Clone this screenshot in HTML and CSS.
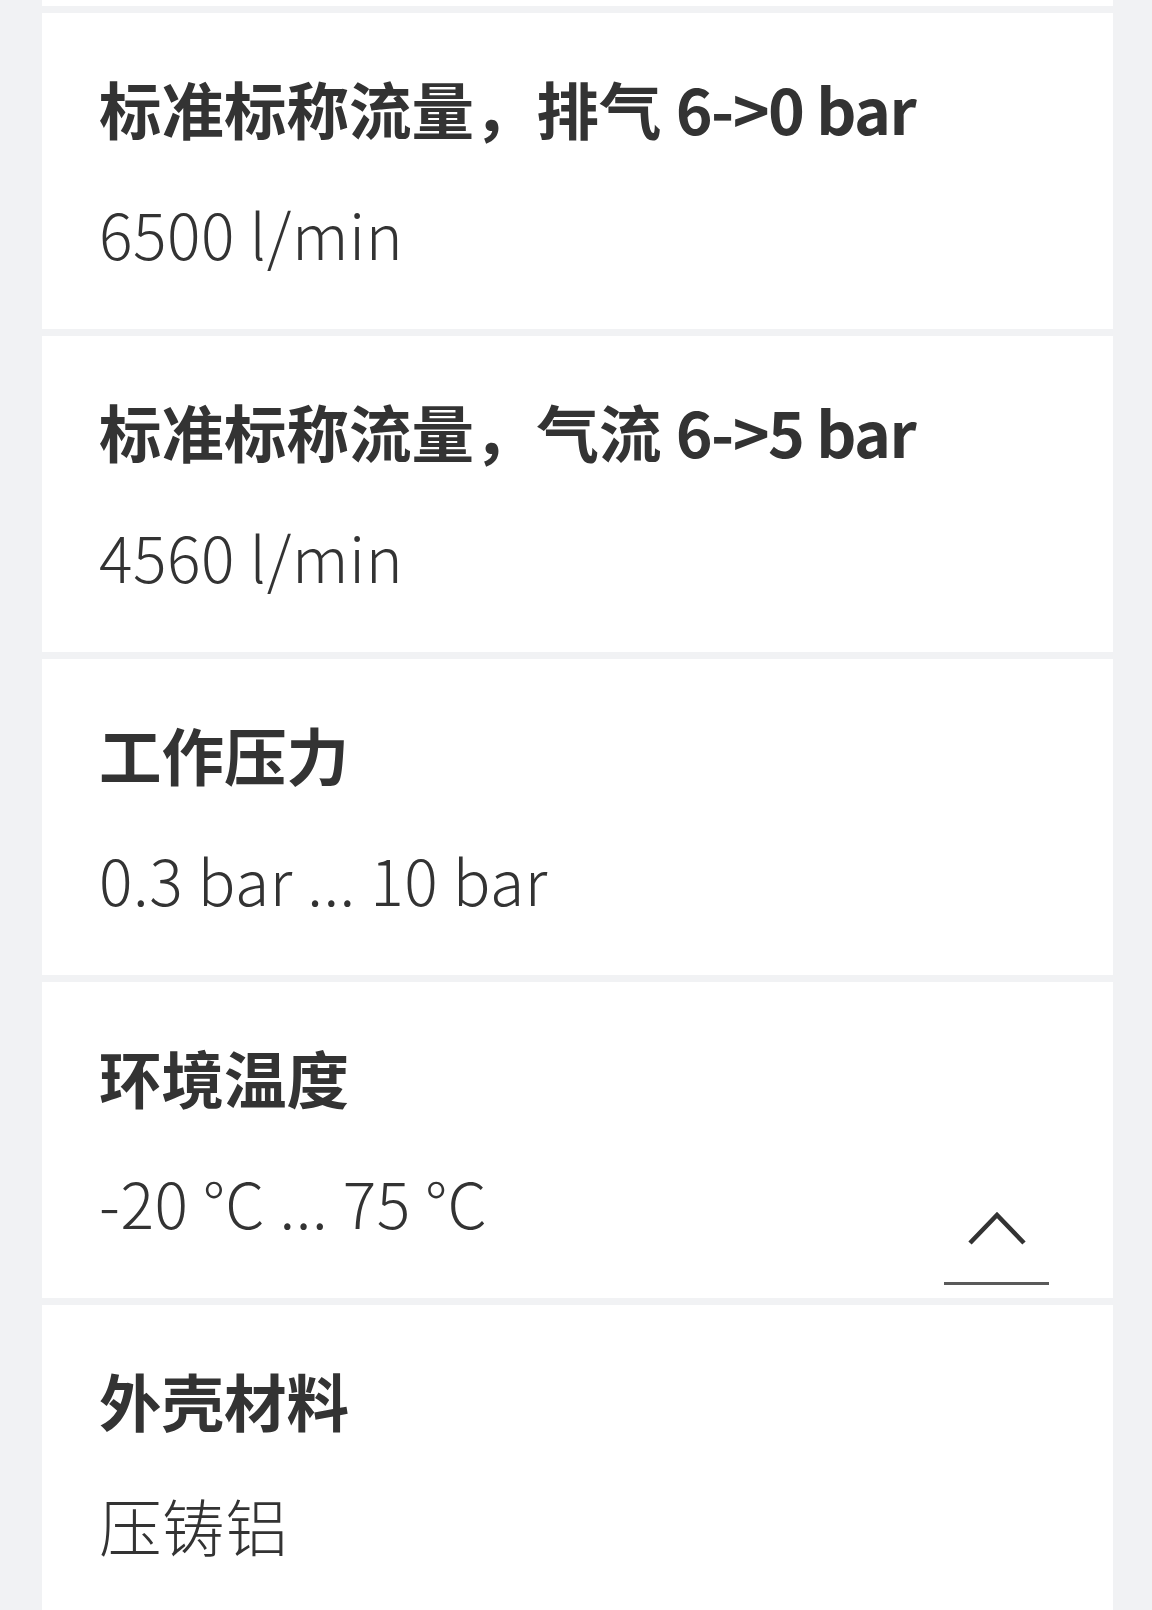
FILE: index.html
```html
<!DOCTYPE html>
<html lang="zh-CN">
<head>
<meta charset="utf-8">
<title>技术参数</title>
<link rel="stylesheet" href="styles.css">
</head>
<body>
<div class="list">
  <div class="card card-cut"></div>
  <div class="card">
    <div class="name">标准标称流量，排气 <span class="latin">6-&gt;0 bar</span></div>
    <div class="value">6500 l/min</div>
  </div>
  <div class="card">
    <div class="name">标准标称流量，气流 <span class="latin">6-&gt;5 bar</span></div>
    <div class="value">4560 l/min</div>
  </div>
  <div class="card">
    <div class="name">工作压力</div>
    <div class="value">0.3 bar ... 10 bar</div>
  </div>
  <div class="card">
    <div class="name">环境温度</div>
    <div class="value">-20 °C ... 75 °C</div>
    <button class="toggle" type="button" aria-label="收起">
      <svg width="105" height="81" viewBox="0 0 105 81"><polyline points="26,42 53,14 80,42" fill="none" stroke="#333" stroke-width="4.6"/></svg>
    </button>
  </div>
  <div class="card">
    <div class="name">外壳材料</div>
    <div class="value">压铸铝</div>
  </div>
</div>
</body>
</html>
```

FILE: styles.css
```css
html, body {
  margin: 0;
  padding: 0;
}
body {
  background: #f1f2f4;
  font-family: "Noto Sans CJK SC", "Noto Sans", sans-serif;
  color: #333333;
  height: 1610px;
  overflow: hidden;
}
.list {
  display: flex;
  flex-direction: column;
  gap: 7px;
  margin-left: 42px;
  width: 1071px;
}
.card {
  position: relative;
  background: #ffffff;
  height: 316px;
  box-sizing: border-box;
  padding: 50px 56px 0 57px;
}
.card-cut {
  height: 6px;
  padding: 0;
}
.name {
  font-size: 62.5px;
  font-weight: 700;
  line-height: 90px;
  white-space: nowrap;
}
.latin {
  letter-spacing: -1.5px;
}
.value {
  margin-top: 35px;
  font-size: 62.5px;
  font-weight: 300;
  line-height: 90px;
  letter-spacing: 0.6px;
  white-space: nowrap;
}
.toggle {
  position: absolute;
  right: 64px;
  bottom: 13px;
  width: 105px;
  height: 84px;
  box-sizing: border-box;
  padding: 0;
  margin: 0;
  background: transparent;
  border: 0;
  border-bottom: 3px solid #5a5a5a;
  display: block;
}
.toggle svg {
  display: block;
}
```
